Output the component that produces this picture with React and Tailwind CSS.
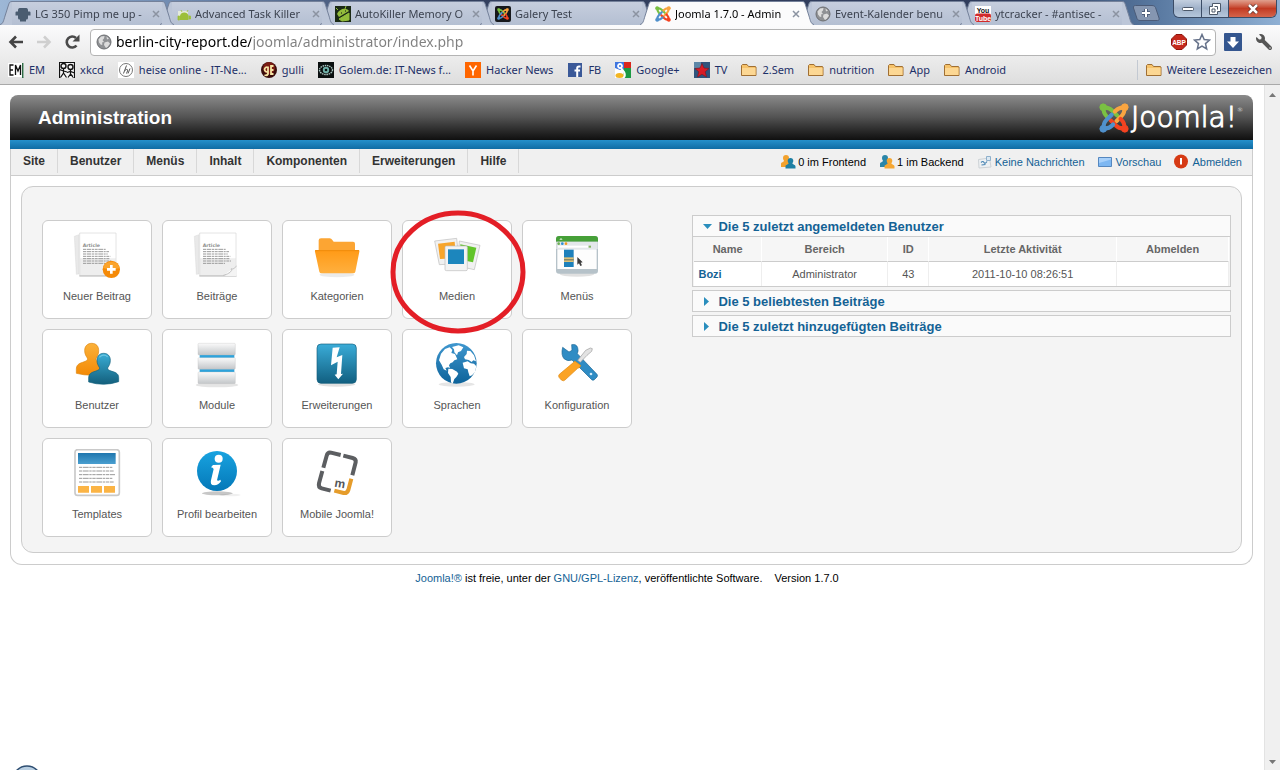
import { useState } from "react";
import { FaWrench } from "react-icons/fa";

/* ---------- Shared marks ---------- */

const joomlaArms = [
  { angle: 0, color: "#7ac143" },
  { angle: 90, color: "#f9a541" },
  { angle: 180, color: "#f44321" },
  { angle: 270, color: "#5091cd" },
];

function JoomlaMark({ className }) {
  return (
    <svg viewBox="0 0 32 32" className={className} aria-hidden="true">
      {joomlaArms.map((arm) => (
        <g key={arm.angle} transform={`rotate(${arm.angle} 16 16)`} stroke={arm.color} fill="none" strokeWidth="4.400" strokeLinecap="round">
          <path d="M5 5C9.500 4.500 12 6 14 8L19.500 13.500" />
          <path d="M5 5C4.500 9.500 6 12 8 14L9 15" />
          <circle cx="4.500" cy="4.500" r="3.600" fill={arm.color} strokeWidth="1" />
        </g>
      ))}
    </svg>
  );
}

function Globe() {
  return (
    <svg viewBox="0 0 16 16" className="size-4 shrink-0" aria-hidden="true">
      <circle cx="8" cy="8" r="7" fill="#8f9194" stroke="#6d6f72" />
      <path d="M2.500 5.500 5 2.500 8.500 2 8 4.500 6.500 6 8 8 6 8.500 6.500 10.500 5 11 3 8.500z" fill="#dcdcdc" />
      <path d="M8.500 8.500 12 7.500 14 9.500 12 12.500 10 14 8 11z" fill="#dcdcdc" />
      <path d="M10.500 2.500 13 4.500 11 5.500z" fill="#dcdcdc" />
    </svg>
  );
}

function Favicon({ children }) {
  return (
    <svg viewBox="0 0 16 16" className="size-4 shrink-0" aria-hidden="true">
      {children}
    </svg>
  );
}

/* ---------- Browser tabs ---------- */

const tabs = [
  {
    title: "LG 350 Pimp me up -",
    icon: (
      <Favicon>
        <path d="M4.500 2h7a2 2 0 0 1 1.500 2v1.500h1.500a1 1 0 0 1 1 1V9.500h-2.500V12a1.500 1.500 0 0 1-1.500 1.500h-.5V15.500H5V13.500h-.5A1.500 1.500 0 0 1 3 12V9.500H.5v-3a1 1 0 0 1 1-1H3V4a2 2 0 0 1 1.500-2z" fill="#4a5c70" />
      </Favicon>
    ),
  },
  {
    title: "Advanced Task Killer",
    icon: (
      <Favicon>
        <path d="M3 5h10v9H3z" fill="#e3eadb" />
        <path d="M5 14V9.500a4.500 4.500 0 0 1 8.500 0V14z" fill="#9cbf3a" />
        <path d="M3 10h1.500v4H3zM14 10h1.500v3H14zM7 6 6 4M12 6l1-2" stroke="#9cbf3a" fill="#9cbf3a" strokeWidth=".8" />
      </Favicon>
    ),
  },
  {
    title: "AutoKiller Memory O",
    icon: (
      <Favicon>
        <path d="M0 0h16v16H0z" fill="#1b2a15" />
        <path d="M2 8C4 3 11 1 14 5L4 11z" fill="#93bd3b" />
        <path d="m4 13 10-6v7l-7 1zM3 4 1 2M10 3l1-3" stroke="#93bd3b" fill="#93bd3b" />
        <path d="M6 7h1M10 5h1" stroke="#111" />
      </Favicon>
    ),
  },
  {
    title: "Galery Test",
    icon: (
      <span className="flex size-4 shrink-0 items-center justify-center rounded-xs bg-[#16181c]">
        <JoomlaMark className="size-3" />
      </span>
    ),
  },
  { title: "Joomla 1.7.0 - Admin", active: true, icon: <JoomlaMark className="size-4 shrink-0" /> },
  { title: "Event-Kalender benu", icon: <Globe /> },
  {
    title: "ytcracker - #antisec -",
    icon: (
      <Favicon>
        <path d="M0 0h16v16H0z" fill="#fff" />
        <rect y="7.500" width="16" height="8.500" rx="2" fill="#d12b2b" />
        <text x="8" y="6.500" fontSize="7" fontWeight="700" textAnchor="middle" fontFamily="Liberation Sans, sans-serif" fill="#111">You</text>
        <text x="8" y="14.500" fontSize="7" fontWeight="700" textAnchor="middle" fontFamily="Liberation Sans, sans-serif" fill="#fff">Tube</text>
      </Favicon>
    ),
  },
];

function TabEdge({ active, flip }) {
  return (
    <svg viewBox="0 0 12 25" className={flip ? "h-[25px] w-3 shrink-0 -scale-x-100" : "h-[25px] w-3 shrink-0"} aria-hidden="true">
      <path d="M0 25C3 24 3.500 21 5 16L8.500 5C9.500 2 10 1.500 12 1.500V25z" fill={active ? "#fbfbfc" : "#bcc6d8"} />
      <path d="M0 24.500C3 24 3.500 21 5 16L8.500 5C9.500 2 10 1.500 12 1.500" fill="none" stroke="#74819a" />
    </svg>
  );
}

function Tab({ tab }) {
  return (
    <div className={tab.active ? "relative z-10 -mr-3.5 flex min-w-0 flex-[0_1_174px]" : "-mr-3.5 flex min-w-0 flex-[0_1_174px]"}>
      <TabEdge active={tab.active} />
      <div
        className={
          tab.active
            ? "mt-px flex h-6 min-w-0 flex-1 items-center border-t border-[#74819a] bg-[#fbfbfc] pr-0.5 pl-[3px]"
            : "mt-px flex h-6 min-w-0 flex-1 items-center border-t border-[#74819a] bg-linear-to-b from-[#c6cede] to-[#b4bfd2] pr-0.5 pl-[3px]"
        }
      >
        {tab.icon}
        <button
          type="button"
          className={
            tab.active
              ? "ml-1 min-w-0 flex-1 overflow-hidden mask-r-from-90% text-left whitespace-nowrap text-black"
              : "ml-1 min-w-0 flex-1 overflow-hidden mask-r-from-90% text-left whitespace-nowrap text-[#3c4350]"
          }
        >
          {tab.title}
        </button>
        <button type="button" aria-label={`${tab.title} schließen`} className="ml-px shrink-0">
          <svg viewBox="0 0 8 8" className="size-2" aria-hidden="true">
            <path d="m1 1 6 6M7 1 1 7" stroke="#8b93a1" strokeWidth="1.500" />
          </svg>
        </button>
      </div>
      <TabEdge active={tab.active} flip />
    </div>
  );
}

function WindowButtons() {
  return (
    <div className="mr-[3px] ml-auto flex h-[18px] overflow-hidden rounded-b-md border border-t-0 border-[#3b4c66]">
      <button type="button" aria-label="Minimieren" className="flex w-7 items-center justify-center border-r border-[#3b4c66] bg-linear-to-b from-[#c3cfdf] via-[#9fb1c9] via-50% to-[#b5c7dc]">
        <svg viewBox="0 0 12 6" className="h-1.5 w-3" aria-hidden="true">
          <rect x=".5" y="1.500" width="11" height="3" rx="1" fill="#fff" stroke="#4c5869" />
        </svg>
      </button>
      <button type="button" aria-label="Verkleinern" className="flex w-[27px] items-center justify-center border-r border-[#3b4c66] bg-linear-to-b from-[#c3cfdf] via-[#9fb1c9] via-50% to-[#b5c7dc]">
        <svg viewBox="0 0 12 12" className="size-3" aria-hidden="true">
          <path d="M3.500.5h8v8h-3v3h-8v-8h3z" fill="#fff" stroke="#4c5869" />
          <path d="M3 6h3v3H3zM5.500 3.500h3v3" fill="none" stroke="#4c5869" />
        </svg>
      </button>
      <button type="button" aria-label="Schließen" className="flex w-[47px] items-center justify-center bg-linear-to-b from-[#e0a08e] via-[#c23a22] via-50% to-[#d5644a]">
        <svg viewBox="0 0 12 10" className="h-2.5 w-3" aria-hidden="true">
          <path d="m2 1 8 8M10 1 2 9" stroke="#5b2b25" strokeWidth="4" />
          <path d="m2 1 8 8M10 1 2 9" stroke="#fff" strokeWidth="2.500" />
        </svg>
      </button>
    </div>
  );
}

function TabStrip() {
  return (
    <div className="flex h-[25px] bg-[linear-gradient(to_right,#9db7d6,#6b86ad_15%,#33405f_35%,#2f3c5c_80%,#57779f_90%,#8fb0d4)]">
      {tabs.map((tab) => (
        <Tab key={tab.title} tab={tab} />
      ))}
      <button type="button" aria-label="Neuer Tab" className="mt-[5px] ml-3 h-4 w-7 shrink-0">
        <svg viewBox="0 0 28 16" className="h-4 w-7" aria-hidden="true">
          <path d="M1.500 3C1 1.500 2 .5 3.500.5H20c2 0 3 1 3.500 2L27 13c.5 1.500 0 2.500-1.500 2.500H8c-2 0-2.500-1-3-2z" fill="#8596b1" stroke="#4b5b78" />
          <path d="M10 8h8M14 4v8" stroke="#4b5b78" strokeWidth="4" />
          <path d="M10 8h8M14 4v8" stroke="#fff" strokeWidth="2" />
        </svg>
      </button>
      <WindowButtons />
    </div>
  );
}

/* ---------- Toolbar ---------- */

function Toolbar() {
  return (
    <div className="flex h-8 items-center bg-linear-to-b from-[#fbfbfc] to-[#ececec] px-2 pt-0.5">
      <button type="button" aria-label="Zurück" className="w-7">
        <svg viewBox="0 0 16 16" className="size-4" aria-hidden="true">
          <path d="M15 8H3M8 2.500 2.500 8 8 13.500" fill="none" stroke="#444" strokeWidth="2.600" />
        </svg>
      </button>
      <button type="button" aria-label="Vorwärts" className="w-7">
        <svg viewBox="0 0 16 16" className="size-4" aria-hidden="true">
          <path d="M1 8h12M8 2.500 13.500 8 8 13.500" fill="none" stroke="#cfcfcf" strokeWidth="2.600" />
        </svg>
      </button>
      <button type="button" aria-label="Neu laden" className="w-[26px]">
        <svg viewBox="0 0 16 16" className="size-4" aria-hidden="true">
          <path d="M12.500 11.500A5.500 5.500 0 1 1 12 4" fill="none" stroke="#4a4a4a" strokeWidth="2.600" />
          <path d="M15.500.5V7.500H8.500z" fill="#4a4a4a" />
        </svg>
      </button>
      <div className="flex h-[27px] min-w-0 flex-1 items-center rounded-sm border border-[#b4b4b4] bg-white pr-1 pl-[5px]">
        <Globe />
        <input
          aria-label="Adresse"
          defaultValue="berlin-city-report.de/joomla/administrator/index.php"
          className="ml-1 min-w-0 flex-1 bg-[linear-gradient(to_right,#000_135px,#808080_135px)] bg-clip-text font-['Noto_Sans',sans-serif] text-[14px] text-transparent caret-black outline-none"
        />
        <button type="button" aria-label="Adblock Plus">
          <svg viewBox="0 0 16 16" className="size-4" aria-hidden="true">
            <path d="M5 .5h6L15.500 5v6L11 15.500H5L.5 11V5z" fill="#c5281c" stroke="#8f140c" />
            <text x="8" y="10.500" fontSize="6.500" fontWeight="700" textAnchor="middle" fontFamily="Liberation Sans, sans-serif" fill="#fff">ABP</text>
          </svg>
        </button>
        <button type="button" aria-label="Lesezeichen" className="ml-1.5">
          <svg viewBox="0 0 18 18" className="size-[18px]" aria-hidden="true">
            <path d="m9 1.500 2.200 5 5.300.5-4 3.600 1.200 5.400L9 13.200 4.300 16l1.200-5.400-4-3.600 5.300-.5z" fill="#fdfdfe" stroke="#66728a" strokeWidth="1.500" />
          </svg>
        </button>
      </div>
      <button type="button" aria-label="Downloads" className="ml-2">
        <svg viewBox="0 0 18 18" className="size-[18px]" aria-hidden="true">
          <rect width="18" height="18" rx="1" fill="#34568f" />
          <path d="M6.500 4h5v4.500H15L9 15 3 8.500h3.500z" fill="#fff" />
        </svg>
      </button>
      <button type="button" aria-label="Einstellungen" className="ml-3.5">
        <FaWrench className="size-4 -scale-x-100 text-[#555]" />
      </button>
    </div>
  );
}

/* ---------- Bookmarks ---------- */

function FolderIcon() {
  return (
    <Favicon>
      <path d="M.5 13.500v-10l1-1h4.500l1.500 2H14.500l.5.5v8.500z" fill="#f6c36b" stroke="#a06f33" />
      <path d="M1 6h13.500v7H1z" fill="#fcd793" />
    </Favicon>
  );
}

const bookmarks = [
  {
    label: "EM",
    icon: (
      <Favicon>
        <path d="M0 1h16v14H0z" fill="#fff" />
        <path d="M14 1h1.500v15H14z" fill="#2f6b45" />
        <path d="M5.500 3H2v10h3.500M2 8h3M7.500 13V3L10 9l2.500-6v10" fill="none" stroke="#111" strokeWidth="1.300" />
      </Favicon>
    ),
  },
  {
    label: "xkcd",
    icon: (
      <Favicon>
        <path d="M0 0h16v16H0z" fill="#f5f5f5" />
        <circle cx="4.500" cy="4" r="2.500" fill="none" stroke="#111" strokeWidth="1.400" />
        <circle cx="11.500" cy="5" r="2.500" fill="none" stroke="#111" strokeWidth="1.400" />
        <path d="M4.500 6.500V11L1.500 15.500M4.500 11l3 4.500M.5 7.500l4 1.500 3.500 1M11.500 7.500V12L9 15.500M11.500 12l3 3.500M8 10.500l3.500-1 4 1.500M0 .5h16M.5 0v16M15.500 0v16" stroke="#111" strokeWidth="1.200" fill="none" />
      </Favicon>
    ),
  },
  {
    label: "heise online - IT-Ne...",
    icon: (
      <Favicon>
        <path d="M0 0h16v16H0z" fill="#fff" />
        <circle cx="8" cy="8" r="6.500" fill="none" stroke="#777" />
        <path d="m5.500 11.500 3-8M7 8.500c2-2 3-1 2.500.5l-1 2.500M10 11.500l2-5" fill="none" stroke="#555" />
      </Favicon>
    ),
  },
  {
    label: "gulli",
    icon: (
      <Favicon>
        <circle cx="8" cy="8" r="8" fill="#3a0d0b" />
        <circle cx="8" cy="6" r="6" fill="#7c1d14" />
        <path d="M7 5.500a2.300 2.300 0 1 0 0 4M7 4.500v7.500q-1 2-3.500 1M12.500 4H10v8h2.500M10 8h2.500" fill="none" stroke="#f5e4a4" strokeWidth="1.800" />
      </Favicon>
    ),
  },
  {
    label: "Golem.de: IT-News f...",
    icon: (
      <Favicon>
        <path d="M0 0h16v16H0z" fill="#0a0f0f" />
        <ellipse cx="8" cy="8" rx="6.500" ry="4.500" fill="none" stroke="#a8c4bf" strokeWidth="1.400" strokeDasharray="1.500 .7" />
        <circle cx="8" cy="8" r="3.200" fill="#6fb0a8" />
        <circle cx="8" cy="8" r="1.300" fill="#071312" />
      </Favicon>
    ),
  },
  {
    label: "Hacker News",
    icon: (
      <Favicon>
        <path d="M0 0h16v16H0z" fill="#ff6600" />
        <path d="M4.500 3.500 8 9l3.500-5.500M8 9v4.500" fill="none" stroke="#fff" strokeWidth="1.600" />
      </Favicon>
    ),
  },
  {
    label: "FB",
    icon: (
      <Favicon>
        <path d="M1 1h14v14H1z" fill="#3b5998" />
        <path d="M13.500 4.500H12q-1.800 0-1.800 1.800V15M7.500 8.500H13" fill="none" stroke="#fff" strokeWidth="2" />
      </Favicon>
    ),
  },
  {
    label: "Google+",
    icon: (
      <Favicon>
        <path d="M0 0h16v16H0z" fill="#fff" />
        <path d="M9 0h7v6H9z" fill="#d9261c" />
        <path d="M8 6h8v10H9z" fill="#1d9a43" />
        <path d="M0 0h9v7L5 8 0 6z" fill="#3f76e0" />
        <circle cx="5" cy="4" r="2" fill="none" stroke="#fff" strokeWidth="1.800" />
        <path d="m6 6 3 4q2 4-1 6" fill="none" stroke="#fff" strokeWidth="2" />
        <ellipse cx="4.500" cy="13.500" rx="4" ry="2.500" fill="#f3b521" />
      </Favicon>
    ),
  },
  {
    label: "TV",
    icon: (
      <Favicon>
        <path d="M0 0h16v16H0z" fill="#30547c" />
        <path d="M0 0h7v6H0z" fill="#5d87a8" />
        <path d="m8 1.500 2 4.500 5 .5-3.800 3.300L12.500 15 8 12.300 3.500 15l1.300-5.200L1 6.500 6 6z" fill="#d91c26" stroke="#7e1620" strokeWidth=".6" />
      </Favicon>
    ),
  },
  { label: "2.Sem", icon: <FolderIcon /> },
  { label: "nutrition", icon: <FolderIcon /> },
  { label: "App", icon: <FolderIcon /> },
  { label: "Android", icon: <FolderIcon /> },
];

function Bookmark({ item }) {
  return (
    <a href="#" className="flex shrink-0 items-center gap-[5px] whitespace-nowrap text-[#1d3068]">
      {item.icon}
      {item.label}
    </a>
  );
}

function BookmarksBar() {
  return (
    <nav aria-label="Lesezeichenleiste" className="flex h-7 items-center gap-3.5 border-b border-[#a9a9a9] bg-linear-to-b from-[#ececec] to-[#dedede] px-2 pb-0.5">
      {bookmarks.map((item) => (
        <Bookmark key={item.label} item={item} />
      ))}
      <div className="ml-auto flex h-5 items-center border-l border-[#c3c9d2] pl-2">
        <Bookmark item={{ label: "Weitere Lesezeichen", icon: <FolderIcon /> }} />
      </div>
    </nav>
  );
}

/* ---------- Control panel icons ---------- */

function PanelIcon({ viewBox, children }) {
  return (
    <svg viewBox={viewBox} className="size-12" aria-hidden="true">
      {children}
    </svg>
  );
}

function Page() {
  const widths = [38, 48, 44, 52, 50, 54, 36];
  return (
    <g>
      <path d="m133 94 14-5v118l-8 1z" fill="#e9e9e9" stroke="#cfcfcf" />
      <path d="M149 84h109v128H149z" fill="#fff" stroke="#d6d6d6" strokeWidth="2" />
      <path d="M150 160h107v51H150z" fill="#bbb" opacity=".25" />
      <path d="M148 213h112" stroke="#b8b8b8" strokeWidth="3" />
      <text x="158" y="125" fontSize="14" fontWeight="700" fontFamily="DejaVu Sans, sans-serif" fill="#8d8d8d">Article</text>
      {widths.map((w, i) => (
        <path key={i} d={`M159 ${133 + i * 7}h${w + 30}`} stroke="#9a9a9a" strokeWidth="3" strokeDasharray="9 2 14 2 6 2" />
      ))}
    </g>
  );
}

const NewArticleIcon = (
  <PanelIcon viewBox="129 78 144 144">
    <Page />
    <circle cx="244" cy="193" r="26" fill="#f58a07" />
    <path d="M219 189a26 26 0 0 1 50 0q-25 8-50 0z" fill="#fba42c" />
    <path d="M231 193h26M244 180v26" stroke="#fff" strokeWidth="8" />
  </PanelIcon>
);

const ArticlesIcon = (
  <PanelIcon viewBox="129 78 144 144">
    <Page />
    <path d="M220 213q22-5 40-30v30z" fill="#f4f4f4" />
    <path d="M220 211q28-8 24-20 3 5 16-8" fill="#fff" stroke="#aaa" strokeWidth="2" />
  </PanelIcon>
);

const CategoriesIcon = (
  <PanelIcon viewBox="849 78 144 144">
    <defs>
      <linearGradient id="folderFront" x1="0" y1="0" x2="0" y2="1">
        <stop offset="0" stopColor="#ff9a16" />
        <stop offset="1" stopColor="#ffb03f" />
      </linearGradient>
    </defs>
    <ellipse cx="921" cy="209" rx="52" ry="8" fill="#000" opacity=".08" />
    <path d="M866 150v-44q0-6 7-6h26q5 0 8 5l4 5h58q6 0 6 6v34z" fill="#fca533" />
    <path d="M857 135h128q4 0 3 5l-12 60q-1 5-7 5H875q-6 0-7-5l-13-60q-1-5 2-5z" fill="url(#folderFront)" />
    <path d="M856 137h131" stroke="#f08c0c" strokeWidth="3" />
  </PanelIcon>
);

const MediaIcon = (
  <PanelIcon viewBox="159 93 144 144">
    <path d="m238 123 62 13-17 73-50-11z" fill="#f1f1f1" stroke="#bdbdbd" strokeWidth="2" />
    <path d="m241 133 48 10-10 44-38-8z" fill="#62c42a" />
    <path d="m164 123 66-8 8 76-60 3z" fill="#f1f1f1" stroke="#bdbdbd" strokeWidth="2" />
    <path d="m174 131 50-6 4 50-48 2z" fill="#f7a52c" />
    <rect x="195" y="138" width="67" height="74" rx="4" fill="#f3f3f3" stroke="#bcbcbc" strokeWidth="2" />
    <path d="M204 148h48v44h-48z" fill="#1c86bd" />
  </PanelIcon>
);

const MenusIcon = (
  <PanelIcon viewBox="519 93 144 144">
    <ellipse cx="591" cy="222" rx="52" ry="8" fill="#000" opacity=".12" />
    <rect x="528" y="108" width="126" height="113" rx="9" fill="#b6c2c9" />
    <path d="M528 125v-8q0-9 9-9h108q9 0 9 9v8z" fill="#46a038" />
    <path d="m538 119 5-5 5 5z" fill="#dff3d8" />
    <path d="M529 125h124v22H529z" fill="#e3e7ea" />
    <path d="M534 137h90v6h-90z" fill="#fff" />
    <circle cx="536" cy="131" r="4" fill="#6fae57" />
    <circle cx="547" cy="131" r="4" fill="#2b8fd6" />
    <circle cx="558" cy="131" r="4" fill="#f09a22" />
    <path d="M626 137h7v6h-7z" fill="#84b55f" />
    <path d="M532 148h118v59H532z" fill="#fdfdfd" />
    <path d="M552 149h29v52h-29z" fill="#1d80bb" />
    <path d="M552 172h29v14h-29z" fill="#dcc17a" />
    <path d="M552 178h29v3h-29z" fill="#5b6b5c" />
    <path d="M592 171v23l5-4 4 8 5-2-4-8 6-1z" fill="#3c3c3c" />
  </PanelIcon>
);

const UsersIcon = (
  <PanelIcon viewBox="129 45 144 144">
    <defs>
      <linearGradient id="userBack" x1="0" y1="0" x2="0" y2="1">
        <stop offset="0" stopColor="#fbb13a" />
        <stop offset="1" stopColor="#f48a05" />
      </linearGradient>
      <linearGradient id="userFront" x1="0" y1="0" x2="0" y2="1">
        <stop offset="0" stopColor="#3aaed6" />
        <stop offset="1" stopColor="#135f7c" />
      </linearGradient>
    </defs>
    <path d="M185 55c14 0 21 9 21 22 0 11-4 17-7 22-3 6 2 9 12 12 14 4 20 9 20 20v12q-45 14-92 2v-12c0-12 6-17 19-21 12-4 16-7 14-13-3-5-8-11-8-22 0-13 8-22 21-22z" fill="url(#userBack)" stroke="#dd8612" strokeWidth="2" />
    <path d="M221 85c13 0 20 9 20 21 0 11-4 16-7 21-3 6 2 9 12 12 14 4 20 9 20 19v12q-44 15-90 1v-12c0-11 6-16 19-20 12-4 15-6 13-12-3-5-7-10-7-21 0-12 7-21 20-21z" fill="url(#userFront)" stroke="#13627f" strokeWidth="2" />
    <path d="M208 97q12-12 25-2" stroke="#9be0f4" strokeWidth="4" fill="none" opacity=".5" />
  </PanelIcon>
);

const ModulesIcon = (
  <PanelIcon viewBox="489 45 144 144">
    <defs>
      <linearGradient id="slab" x1="0" y1="0" x2="0" y2="1">
        <stop offset="0" stopColor="#fafafa" />
        <stop offset=".6" stopColor="#d9dbdd" />
        <stop offset="1" stopColor="#c3c6c9" />
      </linearGradient>
    </defs>
    <ellipse cx="561" cy="180" rx="64" ry="7" fill="#000" opacity=".1" />
    <path d="M509 88h104v14H509zM509 131h104v13H509z" fill="#2da3dc" />
    <rect x="504" y="55" width="112" height="35" rx="3" fill="url(#slab)" stroke="#bfbfbf" />
    <rect x="504" y="98" width="112" height="35" rx="3" fill="url(#slab)" stroke="#bfbfbf" />
    <rect x="504" y="141" width="112" height="35" rx="3" fill="url(#slab)" stroke="#bfbfbf" />
  </PanelIcon>
);

const ExtensionsIcon = (
  <PanelIcon viewBox="849 45 144 144">
    <defs>
      <linearGradient id="plugin" x1="0" y1="0" x2="0" y2="1">
        <stop offset="0" stopColor="#3aacd8" />
        <stop offset="1" stopColor="#115f80" />
      </linearGradient>
    </defs>
    <ellipse cx="920" cy="178" rx="56" ry="7" fill="#000" opacity=".12" />
    <rect x="861" y="57" width="118" height="118" rx="12" fill="url(#plugin)" stroke="#155f7d" strokeWidth="2" />
    <path d="m908 68 21-1-9 30 17-7-4 57 6-1-14 17-11-14 6-1 3-38-20 11z" fill="#fff" />
  </PanelIcon>
);

const LanguagesIcon = (
  <PanelIcon viewBox="114 45 144 144">
    <defs>
      <linearGradient id="sea" x1="0" y1="0" x2="0" y2="1">
        <stop offset="0" stopColor="#3f97cf" />
        <stop offset="1" stopColor="#0d639a" />
      </linearGradient>
    </defs>
    <ellipse cx="185" cy="178" rx="54" ry="7" fill="#000" opacity=".1" />
    <circle cx="184" cy="115" r="61" fill="url(#sea)" />
    <g fill="#fff">
      <path d="m132 106 6-20 12-14 14-5 8 8-3 9 11 3 7 16-9 3-5 6-7 3-4 6 3 8-6-2-8 2 4 8-9-4-6-14z" />
      <path d="m160 131 12 1 14 8 4 6-6 10-6 6-5 14-5-4-1-16-8-12z" />
      <path d="m171 66 20-5 14 6-7 11-9 4-3 9-8-9-1-9z" />
      <path d="m210 103-3-7 8-9 1-10 10 1 11 13 6 18-8-3-5 5-9-6z" />
      <path d="m203 113 15-4 9 6 10 1 7 8-4 17-9 10-7 3-4-12-2-9-11-3z" />
    </g>
  </PanelIcon>
);

const ConfigIcon = (
  <PanelIcon viewBox="474 45 144 144">
    <path d="m503 67 19 14 9-5-1-17q14-3 18 9 3 9-1 18l59 62q3 4 0 8l-8 8q-4 3-8 0l-59-59q-13 5-23-3-11-11-5-35z" fill="#2f8cc4" stroke="#1b6796" strokeWidth="2" />
    <circle cx="588" cy="147" r="4" fill="#d4ecf9" />
    <path d="m548 106 24-30 14-7 6 2-2 8-14 12-20 21z" fill="#e2e2e2" stroke="#9c9c9c" strokeWidth="2" />
    <path d="m536 112 3-4 18 13-2 6-7 3-38 35q-5 5-11 0l-7-8q-3-5 1-9z" fill="#fba324" stroke="#e08a12" strokeWidth="2" />
  </PanelIcon>
);

const TemplatesIcon = (
  <PanelIcon viewBox="129 51 144 144">
    <defs>
      <linearGradient id="banner" x1="0" y1="0" x2="0" y2="1">
        <stop offset="0" stopColor="#1f76ae" />
        <stop offset="1" stopColor="#4a9fd0" />
      </linearGradient>
    </defs>
    <rect x="135" y="53" width="133" height="137" rx="8" fill="#fff" stroke="#c9c9c9" strokeWidth="5" />
    <path d="M144 63h113v33H144z" fill="url(#banner)" />
    {[106, 117, 128, 139, 150].map((y, i) => (
      <path key={y} d={`M147 ${y}h${100 + (i % 3) * 4}`} stroke="#9a9a9a" strokeWidth="3" strokeDasharray="10 2 17 2 7 2" />
    ))}
    <path d="M144 162h33v20h-33zM183 162h33v20h-33zM222 162h33v20h-33z" fill="#fbb445" />
  </PanelIcon>
);

const ProfileIcon = (
  <PanelIcon viewBox="489 51 144 144">
    <defs>
      <linearGradient id="info" x1="0" y1="0" x2="0" y2="1">
        <stop offset="0" stopColor="#18a3e0" />
        <stop offset="1" stopColor="#0478b8" />
      </linearGradient>
    </defs>
    <ellipse cx="562" cy="184" rx="46" ry="6" fill="#000" opacity=".22" />
    <ellipse cx="600" cy="189" rx="32" ry="4" fill="#000" opacity=".06" />
    <circle cx="561" cy="117" r="60" fill="url(#info)" />
    <circle cx="566" cy="80" r="12" fill="#fff" />
    <path d="m543 106 6-7 23-1-11 47q4 3 10-2l2 5q-8 12-20 12-14 0-10-15l8-34q-2-4-8-5z" fill="#fff" />
  </PanelIcon>
);

const MobileIcon = (
  <PanelIcon viewBox="849 51 144 144">
    <g fill="none" strokeWidth="12" strokeLinejoin="round">
      <path d="m880 107 10-36q3-11 13-9l29 7" stroke="#5c5e61" />
      <path d="m940 71 28 7q11 3 9 13l-10 39" stroke="#5c5e61" />
      <path d="m877 117-10 37q-3 12 8 15l27 7" stroke="#5c5e61" />
      <path d="m964 140-9 34q-4 11-14 9l-28-7" stroke="#e59c2b" />
    </g>
    <text x="914" y="166" fontSize="36" fontWeight="700" transform="rotate(10 929 155)" fontFamily="Liberation Sans, sans-serif" fill="#55575a">m</text>
  </PanelIcon>
);

const panelItems = [
  { label: "Neuer Beitrag", icon: NewArticleIcon },
  { label: "Beiträge", icon: ArticlesIcon },
  { label: "Kategorien", icon: CategoriesIcon },
  { label: "Medien", icon: MediaIcon, marked: true },
  { label: "Menüs", icon: MenusIcon },
  { label: "Benutzer", icon: UsersIcon },
  { label: "Module", icon: ModulesIcon },
  { label: "Erweiterungen", icon: ExtensionsIcon },
  { label: "Sprachen", icon: LanguagesIcon },
  { label: "Konfiguration", icon: ConfigIcon },
  { label: "Templates", icon: TemplatesIcon },
  { label: "Profil bearbeiten", icon: ProfileIcon },
  { label: "Mobile Joomla!", icon: MobileIcon },
];

function PanelCard({ item }) {
  return (
    <a href="#" className="relative flex h-[99px] w-[110px] flex-col items-center gap-[7px] rounded-md border border-[#ccc] bg-white pt-2.5 text-[#555]">
      {item.icon}
      <span className="leading-5">{item.label}</span>
      {item.marked && (
        <svg viewBox="0 0 136 124" className="pointer-events-none absolute -top-[11px] -left-[13px] z-10 h-[124px] w-[136px] max-w-none" aria-hidden="true">
          <ellipse cx="68" cy="62" rx="65" ry="59" fill="none" stroke="#e31e26" strokeWidth="5" />
        </svg>
      )}
    </a>
  );
}

/* ---------- Header, menu and status ---------- */

const menu = ["Site", "Benutzer", "Menüs", "Inhalt", "Komponenten", "Erweiterungen", "Hilfe"];

function TwoUsers({ back, front }) {
  return (
    <Favicon>
      <path d="M6 1c2 0 3 1.300 3 3 0 1.500-.7 2-1 3 0 1 3 1 3 3v3H1v-3c0-2 3-2 3-3-.3-1-1-1.500-1-3 0-1.700 1-3 3-3z" fill={back} />
      <path d="M10.500 4c1.800 0 2.800 1.200 2.800 2.800 0 1.300-.6 1.800-.9 2.700 0 1 3.100 1 3.100 3V14.500h-10v-2c0-2 3.100-2 3.100-3-.3-.9-.9-1.400-.9-2.700C7.700 5.200 8.700 4 10.500 4z" fill={front} />
    </Favicon>
  );
}

function StatusItems() {
  return (
    <div className="ml-auto flex items-center gap-[13px] pr-2.5 whitespace-nowrap text-black">
      <span className="flex items-center gap-0.5">
        <TwoUsers back="#f3a22d" front="#1e7fa3" />0 im Frontend
      </span>
      <span className="flex items-center gap-0.5">
        <TwoUsers back="#2a86a8" front="#f5a733" />1 im Backend
      </span>
      <a href="#" className="flex items-center gap-0.5 text-[#146295]">
        <Favicon>
          <path d="M1.500 5.500 12.500 4l1.500 9-12 1z" fill="#eef1f3" stroke="#cdd2d6" />
          <path d="M4 8.500q2-2 3 0t3-1M4.500 11l4-.5" fill="none" stroke="#4a86b4" strokeWidth="1.200" />
          <path d="M9.500 2.500h4v4h-4z" fill="#dbe8f2" stroke="#8fb0cc" />
        </Favicon>
        Keine Nachrichten
      </a>
      <a href="#" className="flex items-center gap-1 text-[#146295]">
        <svg viewBox="0 0 14 16" className="h-4 w-3.5 shrink-0" aria-hidden="true">
          <path d="M.5 3.500h13v9H.5z" fill="#7db7f2" stroke="#5587bf" />
          <path d="m1 9 12-3.500V4H1z" fill="#a7d0fa" />
        </svg>
        Vorschau
      </a>
      <a href="#" className="flex items-center gap-1 text-[#146295]">
        <svg viewBox="0 0 14 16" className="h-4 w-3.5 shrink-0" aria-hidden="true">
          <circle cx="7" cy="7.500" r="7" fill="#d63a14" />
          <path d="M7 4v6.500" stroke="#fff" strokeWidth="2" />
        </svg>
        Abmelden
      </a>
    </div>
  );
}

function PageHeader() {
  return (
    <header>
      <div className="flex h-[45px] items-center justify-between rounded-t-lg bg-linear-to-b from-[#8b8b8b] via-[#525252] via-50% to-[#101010] pr-2.5 pl-7">
        <h1 className="text-[19px] font-bold text-white">Administration</h1>
        <a href="#" aria-label="Joomla!" className="flex items-center gap-0.5">
          <JoomlaMark className="size-[30px]" />
          <span className="flex items-start font-['DejaVu_Sans',sans-serif] text-[28px] leading-8 font-extralight text-white [-webkit-text-stroke:1px_white]">
            Joomla!<span className="text-[6px] leading-4 [-webkit-text-stroke:0px]">®</span>
          </span>
        </a>
      </div>
      <div className="h-[9px] bg-linear-to-b from-[#2590cb] to-[#0f6ca4]" />
      <div className="flex h-[27px] items-center border-x border-b border-[#ccc] bg-[#f0f0f0]">
        <nav className="flex h-full pb-0.5">
          {menu.map((label) => (
            <a key={label} href="#" className="flex items-center border-r border-[#d8d8d8] px-3 text-[12px] leading-4 font-bold text-[#333]">
              {label}
            </a>
          ))}
        </nav>
        <StatusItems />
      </div>
    </header>
  );
}

/* ---------- Accordion ---------- */

function UsersTable() {
  const head = "border-r border-b border-r-white border-b-[#ccc] bg-[#f6f6f6] text-center font-bold text-[#666]";
  const cell = "border-r border-[#eee] bg-white text-center text-[#555]";
  return (
    <table className="w-full table-fixed border-separate border-spacing-0 border-t border-[#ccc] bg-[#f4f4f4] px-px">
      <colgroup>
        <col className="w-[12.6%]" />
        <col className="w-[23.7%]" />
        <col className="w-[7.6%]" />
        <col className="w-[35.2%]" />
        <col />
      </colgroup>
      <thead>
        <tr className="h-[25px]">
          <th className={head}>Name</th>
          <th className={head}>Bereich</th>
          <th className={head}>ID</th>
          <th className={head}>Letzte Aktivität</th>
          <th className={head}>Abmelden</th>
        </tr>
      </thead>
      <tbody>
        <tr className="h-6">
          <td className="border-r border-[#eee] bg-white pl-1 font-bold">
            <a href="#" className="text-[#146295]">Bozi</a>
          </td>
          <td className={cell}>Administrator</td>
          <td className={cell}>43</td>
          <td className={cell}>2011-10-10 08:26:51</td>
          <td className={cell} />
        </tr>
      </tbody>
    </table>
  );
}

const sections = [
  { title: "Die 5 zuletzt angemeldeten Benutzer", body: <UsersTable /> },
  { title: "Die 5 beliebtesten Beiträge" },
  { title: "Die 5 zuletzt hinzugefügten Beiträge" },
];

function Accordion() {
  const [open, setOpen] = useState(0);
  return (
    <div className="flex flex-col gap-[3px]">
      {sections.map((section, i) => (
        <section key={section.title} className="border border-[#ccc] bg-[#fafafa]">
          <h3>
            <button type="button" aria-expanded={open === i} onClick={() => setOpen(i)} className="flex h-5 w-full items-center gap-1.5 pt-px pl-2.5 text-[13px] font-bold text-[#146295]">
              <svg viewBox="0 0 9 9" className="size-[9px]" aria-hidden="true">
                <path d={open === i ? "M0 2h9L4.500 7z" : "M1 0v9l5-4.500z"} fill="#2a8ebd" />
              </svg>
              {section.title}
            </button>
          </h3>
          {open === i && section.body}
        </section>
      ))}
    </div>
  );
}

/* ---------- Page ---------- */

function Scrollbar() {
  return (
    <div className="flex w-4 shrink-0 flex-col items-center justify-between border-l border-[#e3e3e3] bg-[#f0f0f0] pt-2 pb-1.5" aria-hidden="true">
      <svg viewBox="0 0 7 4" className="h-1 w-[7px]">
        <path d="M3.500 0 7 4H0z" fill="#777" />
      </svg>
      <svg viewBox="0 0 7 4" className="h-1 w-[7px]">
        <path d="M0 0h7L3.500 4z" fill="#777" />
      </svg>
    </div>
  );
}

export default function App() {
  return (
    <div className="flex min-h-screen flex-col bg-white font-['Liberation_Sans',Arial,sans-serif] text-[11px] leading-4">
      <div className="font-['Noto_Sans',sans-serif]">
        <TabStrip />
        <Toolbar />
        <BookmarksBar />
      </div>
      <div className="flex flex-1">
        <div className="flex min-w-0 flex-1 flex-col">
          <div className="pt-2.5 pr-[11px] pl-2.5">
            <PageHeader />
            <main className="rounded-b-xl border border-t-0 border-[#ccc] px-2.5 pt-2.5 pb-[11px]">
              <div className="flex rounded-xl border border-[#ccc] bg-[#f4f4f4] pb-[15px]">
                <div className="w-[55%] shrink-0 pt-[33px] pl-5">
                  <div className="flex flex-wrap gap-2.5">
                    {panelItems.map((item) => (
                      <PanelCard key={item.label} item={item} />
                    ))}
                  </div>
                </div>
                <div className="min-w-0 flex-1 pt-7 pr-2.5">
                  <Accordion />
                </div>
              </div>
            </main>
          </div>
          <footer className="flex justify-center gap-3 pt-[5px] pr-2.5 text-black">
            <p>
              <a href="#" className="text-[#146295]">Joomla!®</a> ist freie, unter der{" "}
              <a href="#" className="text-[#146295]">GNU/GPL-Lizenz</a>, veröffentlichte Software.
            </p>
            <p>Version 1.7.0</p>
          </footer>
          <div className="mt-auto h-[5px] overflow-hidden pl-3" aria-hidden="true">
            <svg viewBox="0 0 30 30" className="size-[30px]">
              <circle cx="15" cy="15" r="14" fill="#b9cfe2" stroke="#2f4f72" strokeWidth="1.500" />
            </svg>
          </div>
        </div>
        <Scrollbar />
      </div>
    </div>
  );
}
